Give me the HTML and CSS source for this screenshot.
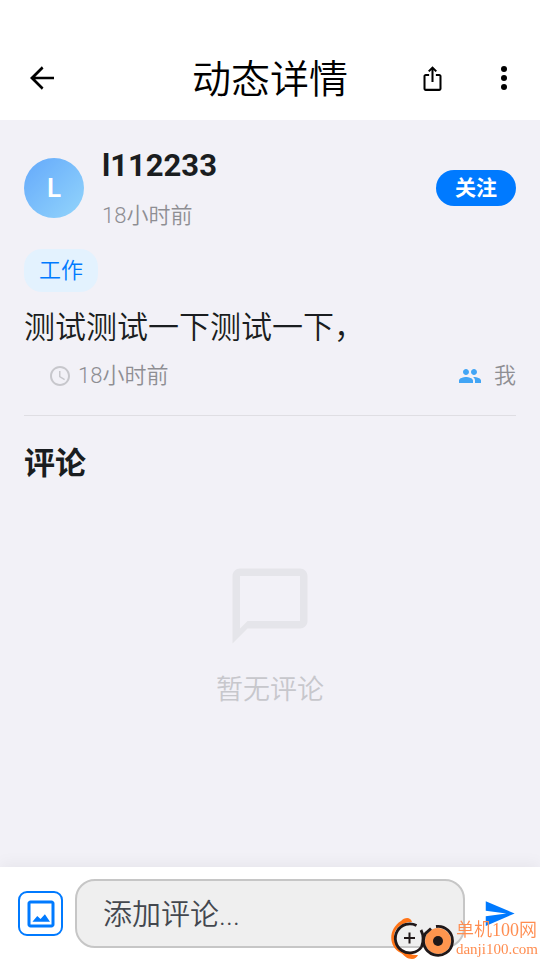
FILE: index.html
```html
<!DOCTYPE html>
<html lang="zh-CN">
<head>
<meta charset="utf-8">
<meta name="viewport" content="width=device-width, initial-scale=1">
<title>动态详情</title>
<link rel="stylesheet" href="styles.css">
</head>
<body>
<header class="topbar">
  <button class="icon-btn" type="button" aria-label="返回">
    <svg class="icon-lg" viewBox="0 0 24 24"><path d="M20 11.1H7.5l5.5-5.5L11.900 4.200 4 12l7.900 7.800 1.100-1.400-5.500-5.500H20z"/></svg>
  </button>
  <h1 class="title">动态详情</h1>
  <div class="actions">
    <button class="icon-btn" type="button" aria-label="分享">
      <svg class="icon-md" viewBox="0 0 24 24"><path d="M16 5l-1.3 1.300-1.800-1.800V15h-1.800V4.500L9.300 6.300 8 5l4-4 4 4zm4 5v11c0 1.1-.9 2-2 2H6c-1.11 0-2-.9-2-2V10c0-1.11.89-2 2-2h3v1.800H5.800v11.400h12.400V9.800H15V8h3c1.1 0 2 .89 2 2z"/></svg>
    </button>
    <button class="icon-btn" type="button" aria-label="更多">
      <svg class="icon-lg" viewBox="0 0 24 24"><circle cx="12" cy="6" r="2"/><circle cx="12" cy="12" r="2"/><circle cx="12" cy="18" r="2"/></svg>
    </button>
  </div>
</header>

<main class="content">
  <article class="post">
    <div class="author">
      <div class="avatar">L</div>
      <div class="author-text">
        <h2 class="name">l112233</h2>
        <p class="time">18小时前</p>
      </div>
      <button class="follow" type="button">关注</button>
    </div>
    <a class="tag" href="#work">工作</a>
    <p class="body">测试测试一下测试一下，</p>
    <div class="meta">
      <span class="meta-time">
        <svg class="icon-clock" viewBox="0 0 24 24"><path d="M11.99 2C6.47 2 2 6.48 2 12s4.47 10 9.99 10C17.52 22 22 17.52 22 12S17.52 2 11.99 2zM12 20c-4.42 0-8-3.58-8-8s3.58-8 8-8 8 3.58 8 8-3.58 8-8 8z"/><path d="M12.5 7H11v6l5.25 3.15.75-1.23-4.5-2.67z"/></svg>
        18小时前
      </span>
      <span class="meta-people">
        <svg class="icon-people" viewBox="0 0 24 24"><path d="M16 11c1.66 0 2.99-1.34 2.99-3S17.66 5 16 5s-3 1.34-3 3 1.34 3 3 3zm-8 0c1.66 0 2.99-1.34 2.99-3S9.66 5 8 5 5 6.34 5 8s1.34 3 3 3zm0 2c-2.33 0-7 1.17-7 3.5V19h14v-2.5c0-2.33-4.67-3.5-7-3.5zm8 0c-.29 0-.62.02-.97.05 1.16.84 1.97 1.97 1.97 3.45V19h6v-2.5c0-2.33-4.67-3.5-7-3.5z"/></svg>
        我
      </span>
    </div>
  </article>
  <section class="comments">
    <h2 class="section-title">评论</h2>
    <div class="empty">
      <svg class="icon-empty" viewBox="0 0 24 24"><path d="M20 2H4c-1.1 0-2 .9-2 2v18l4-4h14c1.1 0 2-.9 2-2V4c0-1.1-.9-2-2-2zm0 14H6l-2 2V4h16v12z"/></svg>
      <p class="empty-text">暂无评论</p>
    </div>
  </section>
</main>

<form class="composer">
  <button class="image-btn" type="button" aria-label="添加图片">
    <svg class="icon-lg" viewBox="0 0 24 24"><path d="M19 5v14H5V5h14m0-2H5c-1.1 0-2 .9-2 2v14c0 1.1.9 2 2 2h14c1.1 0 2-.9 2-2V5c0-1.1-.9-2-2-2z"/><path d="M14.6 12.2l-2.9 3.2-2.2-2L6.3 17.2H18z"/></svg>
  </button>
  <input class="field" type="text" aria-label="添加评论" placeholder="添加评论...">
  <button class="icon-btn send" type="button" aria-label="发送">
    <svg class="icon-send" viewBox="0 0 24 24"><path d="M2.01 21L23 12 2.01 3 2 10l15 2-15 2z"/></svg>
  </button>
</form>

<div class="watermark">
  <svg class="wm-logo" viewBox="0 0 64 44">
    <path d="M22 6C20 0 14 2 11 5C-2 13-2 31 11 37C15 40 17 43 22 43C25 43 27 41 28 39C15 39 4 31 4 21C4 13 11 6 22 6Z" fill="#ff7417"/>
    <path d="M26.5 9.5A14.5 14.5 0 1 0 31.500 31" fill="none" stroke="#201819" stroke-width="2.8"/>
    <path d="M14 22h11M19.5 16.5v11" stroke="#201819" stroke-width="2"/>
    <circle cx="48" cy="25" r="13" fill="#ff954e"/>
    <path d="M46 10.5A14.5 14.5 0 1 1 35.500 17.500L41 12.500" fill="none" stroke="#201819" stroke-width="2.8"/>
    <path d="M31 14Q35 22 31.500 31" fill="none" stroke="#201819" stroke-width="2.8"/>
    <circle cx="48" cy="25" r="5" fill="#201819"/>
  </svg>
  <div class="wm-text">
    <span class="wm-name">单机100网</span>
    <span class="wm-site">danji100.com</span>
  </div>
</div>
</body>
</html>
```
FILE: styles.css
```css
* { box-sizing: border-box; }

body {
  margin: 0;
  min-height: 100vh;
  display: flex;
  flex-direction: column;
  background: #f2f1f7;
  color: #1a1d20;
  font-family: Roboto, "Noto Sans CJK SC", sans-serif;
  font-weight: 350;
}

h1, h2, p { margin: 0; }

button {
  border: 0;
  padding: 0;
  background: none;
  color: inherit;
  font: inherit;
}

svg { display: block; fill: currentColor; }

.topbar {
  display: grid;
  grid-template-columns: 1fr auto 1fr;
  align-items: center;
  padding: 42px 0 6px;
  background: #fff;
  color: #000;
}

.title { padding-top: 4px; font-size: 39px; line-height: 68px; font-weight: 350; }

.icon-btn {
  width: 72px;
  height: 72px;
  display: grid;
  place-items: center;
}

.topbar > .icon-btn { width: 84px; }
.actions { display: flex; justify-content: flex-end; }

.icon-lg { width: 36px; height: 36px; }
.icon-md { width: 27px; height: 27px; }

.content { flex: 1; padding: 24px; }

.post { border-bottom: 1px solid #dfdee3; padding-bottom: 23px; }

.author { display: flex; align-items: center; }

.avatar {
  width: 60px;
  height: 60px;
  border-radius: 50%;
  background: linear-gradient(135deg, #64a9fb, #93d5fb);
  color: #fff;
  font-size: 26px;
  line-height: 60px;
  font-weight: 600;
  text-align: center;
}

.author-text { flex: 1; padding-left: 18px; }
.name { font-size: 31px; line-height: 44px; font-weight: 700; }
.time { margin-top: 12px; font-size: 22px; line-height: 32px; color: #8e8e93; }

.follow {
  width: 80px;
  height: 36px;
  border-radius: 18px;
  background: #007aff;
  color: #fff;
  font-size: 21px;
  line-height: 36px;
  font-weight: 700;
}

.tag {
  display: inline-block;
  margin-top: 17px;
  padding: 1px 15px 0;
  border-radius: 18px;
  background: #e3f2fe;
  color: #007aff;
  font-size: 22px;
  line-height: 42px;
  text-decoration: none;
  vertical-align: top;
}

.body { margin-top: 14px; font-size: 31px; line-height: 44px; }

.meta {
  display: flex;
  justify-content: space-between;
  margin-top: 10px;
  padding-left: 24px;
  font-size: 22px;
  line-height: 32px;
  color: #8e8e93;
}

.meta-time, .meta-people { display: flex; align-items: center; }
.meta-time { gap: 6px; }
.meta-people { gap: 12px; }
.icon-clock { width: 24px; height: 24px; color: #c7c7cc; }
.icon-people { width: 24px; height: 24px; color: #42a5f5; }

.section-title { margin-top: 26px; font-size: 31px; line-height: 44px; font-weight: 700; }

.empty {
  display: flex;
  flex-direction: column;
  align-items: center;
  padding-top: 75px;
}

.icon-empty { width: 90px; height: 90px; color: #e5e5ea; }
.empty-text { margin-top: 19px; font-size: 27px; line-height: 40px; color: #c7c7cc; }

.composer {
  display: flex;
  align-items: center;
  padding: 12px 6px 12px 18px;
  background: #fff;
  box-shadow: 0 -3px 15px rgba(0, 0, 0, 0.05);
}

.image-btn {
  width: 45px;
  height: 45px;
  display: grid;
  place-items: center;
  border: 2px solid #007aff;
  border-radius: 9px;
  color: #007aff;
}

.field {
  flex: 1;
  min-width: 0;
  height: 69px;
  margin-left: 12px;
  padding: 2px 26px 0;
  border: 2px solid #c6c6c6;
  border-radius: 20px;
  background: #efefef;
  color: #1a1d20;
  font-family: inherit;
  font-weight: 350;
  font-size: 29px;
}

.field::placeholder { color: #43474e; opacity: 1; }

.send { width: 69px; height: 69px; color: #007aff; }
.icon-send { width: 33px; height: 33px; }

.watermark {
  position: fixed;
  right: 2px;
  bottom: 0;
  display: flex;
  align-items: center;
  gap: 2px;
  color: #ff8d50;
  font-family: "Liberation Serif", "Noto Sans CJK SC", serif;
  pointer-events: none;
}

.wm-logo { width: 64px; height: 44px; }
.wm-text { display: flex; flex-direction: column; }
.wm-name { padding-top: 2px; font-size: 18px; line-height: 20px; }
.wm-site { font-size: 15px; line-height: 18px; }
```
